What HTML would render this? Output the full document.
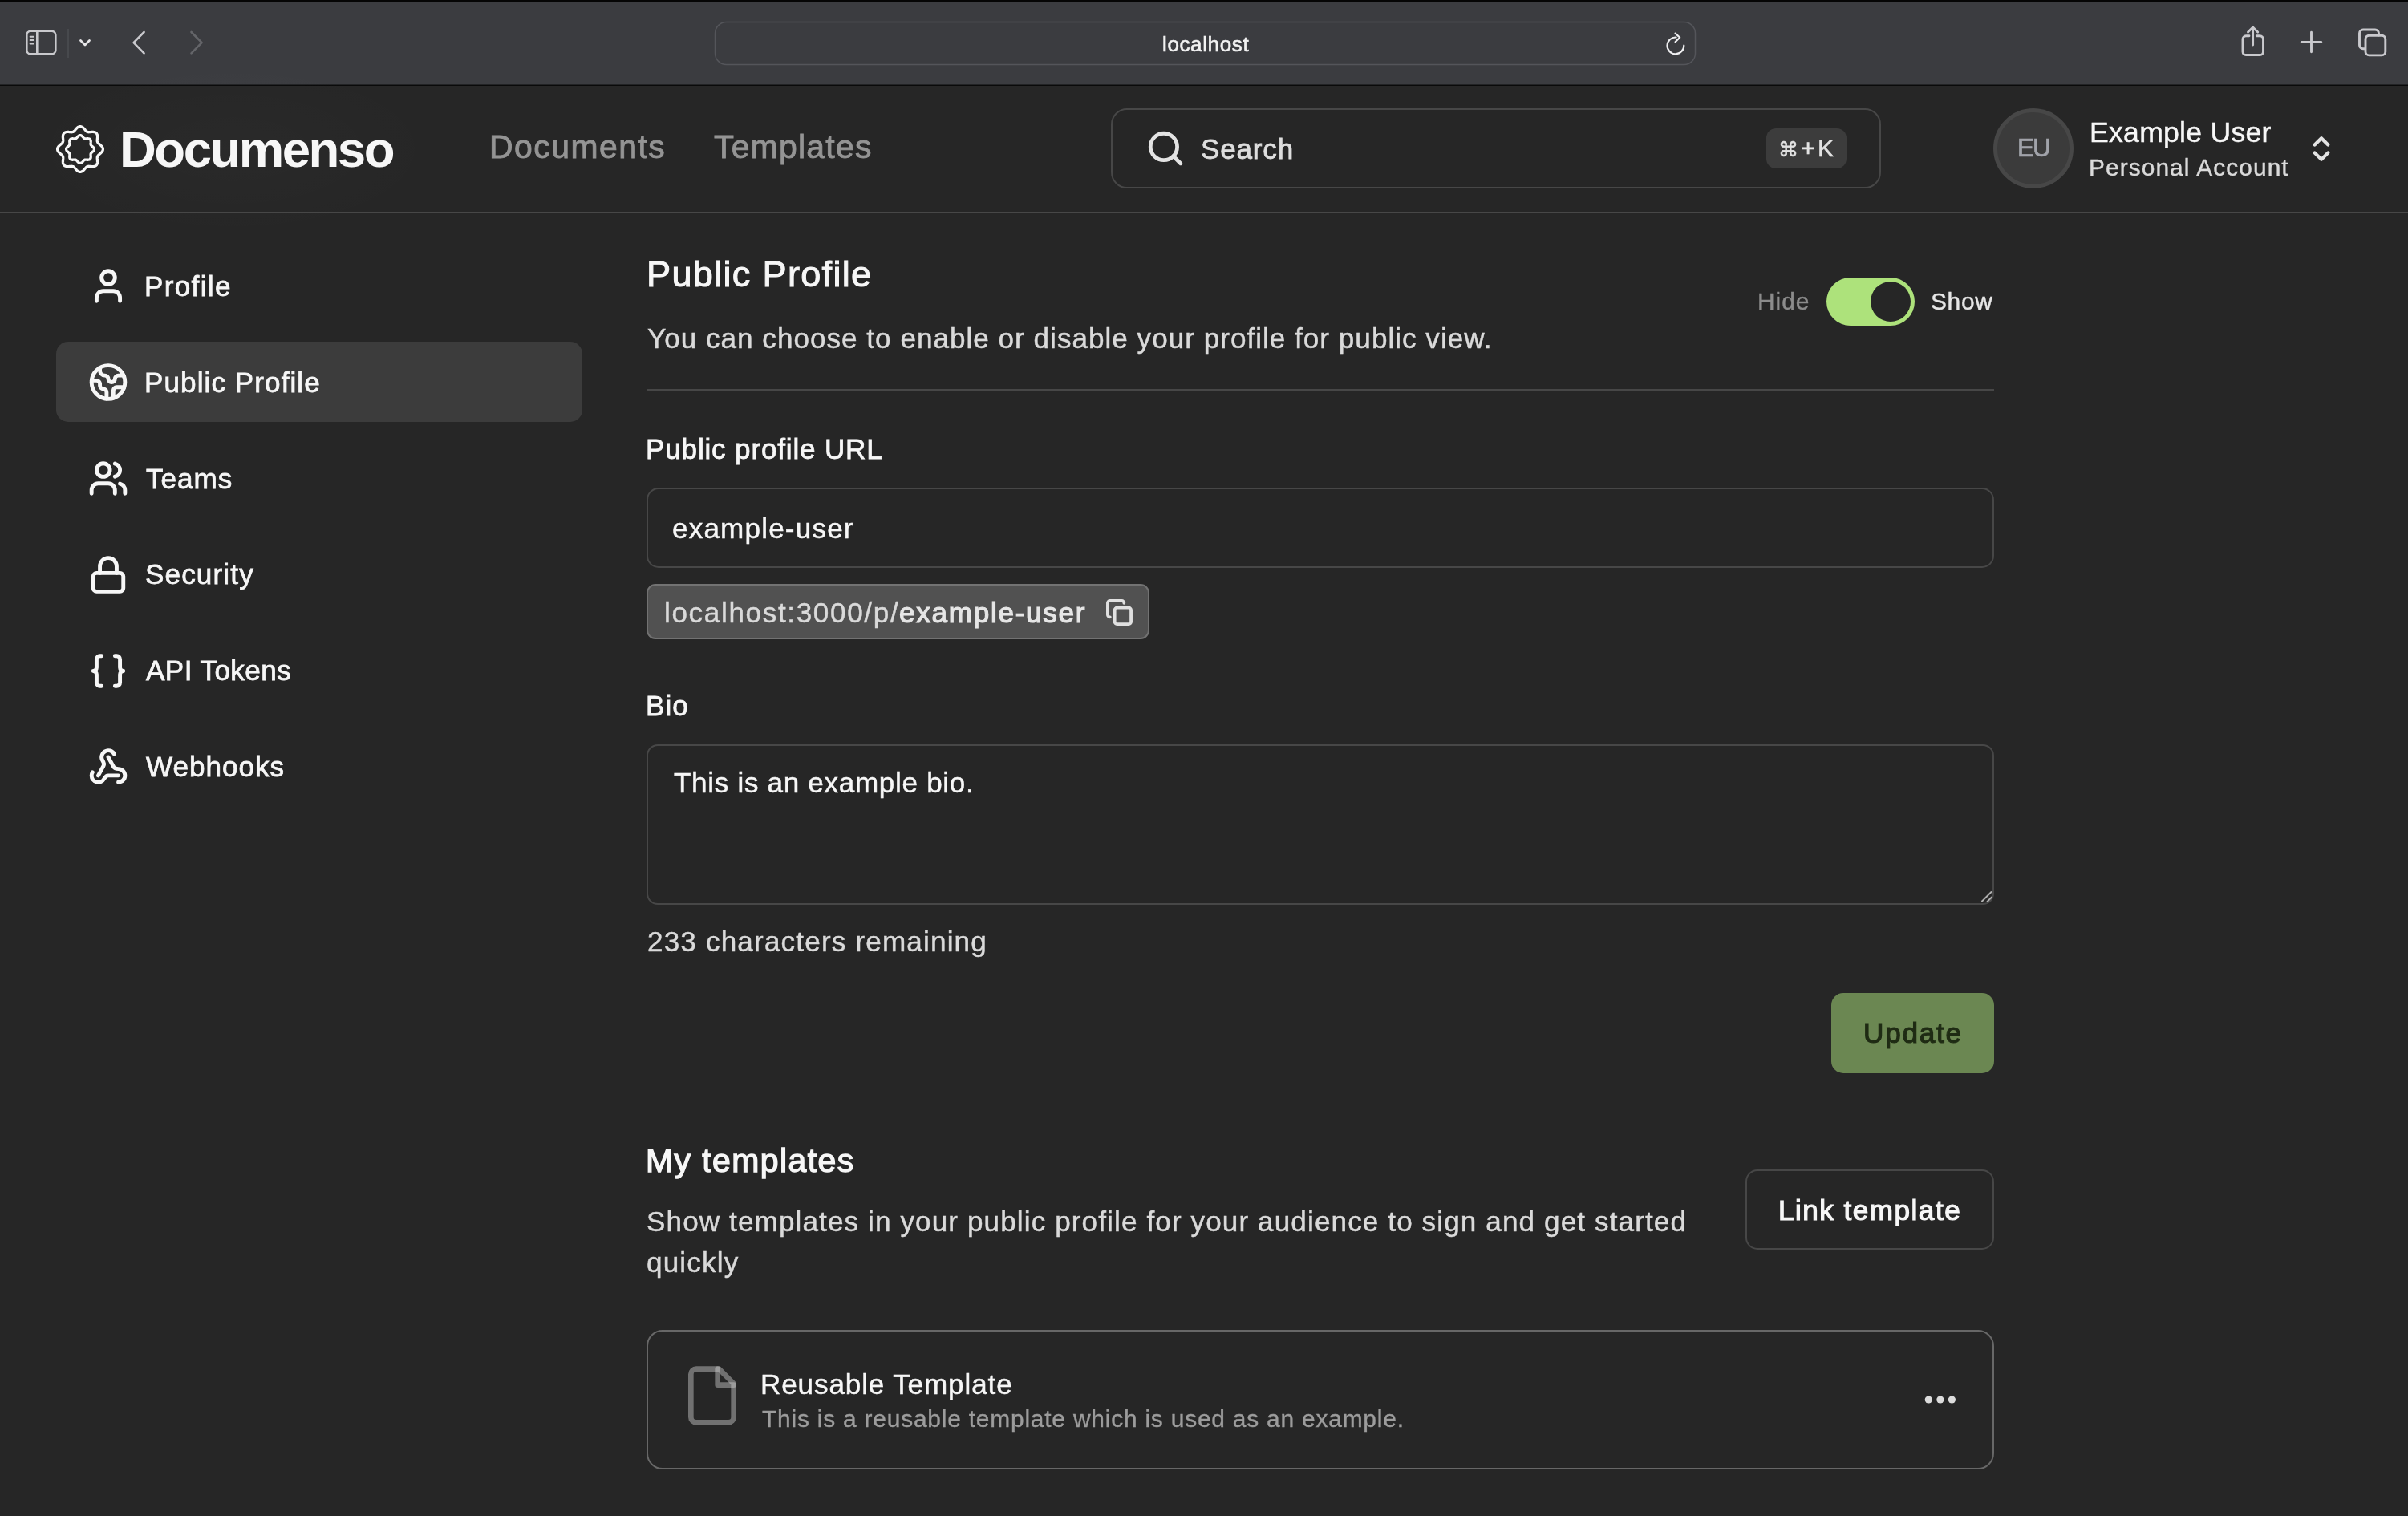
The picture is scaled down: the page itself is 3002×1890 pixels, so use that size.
<!DOCTYPE html>
<html>
<head>
<meta charset="utf-8">
<style>
html,body{margin:0;padding:0;}
body{width:3002px;height:1890px;overflow:hidden;background:#262626;position:relative;font-family:"Liberation Sans",sans-serif;}
.t{position:absolute;white-space:nowrap;font-family:"Liberation Sans",sans-serif;will-change:transform;}
svg.ov{position:absolute;left:0;top:0;}
</style>
</head>
<body>
<svg class="ov" width="3002" height="1890" viewBox="0 0 3002 1890">
  <!-- Safari toolbar -->
  <rect x="0" y="0" width="3002" height="106" fill="#3b3c40"/>
  <rect x="0" y="0" width="3002" height="2" fill="#050505"/>
  <rect x="0" y="105.5" width="3002" height="1.5" fill="#0a0a0a"/>
  <g fill="none" stroke="#c9c9cd" stroke-width="2.6" stroke-linecap="round" stroke-linejoin="round">
    <rect x="33.3" y="38.8" width="36" height="28.6" rx="5"/>
    <line x1="46.3" y1="39" x2="46.3" y2="67"/>
    <line x1="37.6" y1="45.7" x2="41.7" y2="45.7" stroke-width="2"/>
    <line x1="37.6" y1="50.1" x2="41.7" y2="50.1" stroke-width="2"/>
    <line x1="37.6" y1="54.4" x2="41.7" y2="54.4" stroke-width="2"/>
    <polyline points="179.6,40 166.6,53.2 179.6,66.3"/>
  </g>
  <line x1="85" y1="36" x2="85" y2="72" stroke="#55565a" stroke-width="1"/>
  <polyline points="100.5,50.5 106,56 111.5,50.5" fill="none" stroke="#e6e6e8" stroke-width="2.8" stroke-linecap="round" stroke-linejoin="round"/>
  <polyline points="238.5,40 251.6,53.2 238.5,66.3" fill="none" stroke="#646569" stroke-width="2.6" stroke-linecap="round" stroke-linejoin="round"/>
  <!-- url field -->
  <rect x="891.5" y="27.5" width="1222" height="53" rx="14" fill="#3b3c40" stroke="#54555a" stroke-width="1.5"/>
  <g fill="none" stroke="#efeff1" stroke-width="2.2" stroke-linecap="round" stroke-linejoin="round">
    <path d="M2099.3 56.5 A10.4 10.4 0 1 1 2089.5 46.5"/>
    <polyline points="2088.6,41.6 2094.2,46.8 2088.6,52.2"/>
  </g>
  <g fill="none" stroke="#c9c9cd" stroke-width="2.9" stroke-linecap="round" stroke-linejoin="round">
    <path d="M2804 44.8 H2800 a4 4 0 0 0 -4 4 V64.5 a4 4 0 0 0 4 4 H2817.5 a4 4 0 0 0 4 -4 V48.8 a4 4 0 0 0 -4 -4 H2813.3"/>
    <line x1="2808.6" y1="34.5" x2="2808.6" y2="56"/>
    <polyline points="2802.5,40 2808.6,34 2814.7,40"/>
    <line x1="2869.3" y1="52.5" x2="2893.7" y2="52.5"/>
    <line x1="2881.5" y1="40.3" x2="2881.5" y2="64.7"/>
    <path d="M2948.5 60.8 H2946 a4.5 4.5 0 0 1 -4.5 -4.5 V41.5 a4.5 4.5 0 0 1 4.5 -4.5 H2961 a4.5 4.5 0 0 1 4.5 4.5 V44"/>
    <rect x="2949" y="44.3" width="24.8" height="24.6" rx="4.5"/>
  </g>

  <!-- app header -->
  <defs><radialGradient id="glow" cx="0.5" cy="0.5" r="0.5"><stop offset="0" stop-color="#ffffff" stop-opacity="0.018"/><stop offset="1" stop-color="#ffffff" stop-opacity="0"/></radialGradient></defs>
  <ellipse cx="290" cy="186" rx="260" ry="110" fill="url(#glow)"/>
  <rect x="0" y="264" width="3002" height="2" fill="#474747"/>
  <g fill="none" stroke="#f7f7f7" stroke-width="3.3" id="logo">
    <path d="M100.00,157.60 L100.56,157.64 L101.11,157.74 L101.66,157.92 L102.19,158.16 L102.71,158.47 L103.22,158.82 L103.70,159.22 L104.17,159.66 L104.62,160.12 L105.05,160.60 L105.47,161.08 L105.87,161.57 L106.25,162.04 L106.63,162.49 L107.01,162.91 L107.38,163.29 L107.76,163.63 L108.14,163.93 L108.54,164.18 L108.95,164.38 L109.39,164.53 L109.85,164.64 L110.33,164.70 L110.84,164.73 L111.38,164.72 L111.94,164.68 L112.52,164.63 L113.13,164.58 L113.75,164.52 L114.39,164.46 L115.03,164.43 L115.68,164.42 L116.32,164.44 L116.94,164.51 L117.55,164.61 L118.13,164.77 L118.68,164.97 L119.19,165.24 L119.66,165.55 L120.08,165.92 L120.45,166.34 L120.76,166.81 L121.03,167.32 L121.23,167.87 L121.39,168.45 L121.49,169.06 L121.56,169.68 L121.58,170.32 L121.57,170.97 L121.54,171.61 L121.48,172.25 L121.42,172.87 L121.37,173.48 L121.32,174.06 L121.28,174.62 L121.27,175.16 L121.30,175.67 L121.36,176.15 L121.47,176.61 L121.62,177.05 L121.82,177.46 L122.07,177.86 L122.37,178.24 L122.71,178.62 L123.09,178.99 L123.51,179.37 L123.96,179.75 L124.43,180.13 L124.92,180.53 L125.40,180.95 L125.88,181.38 L126.34,181.83 L126.78,182.30 L127.18,182.78 L127.53,183.29 L127.84,183.81 L128.08,184.34 L128.26,184.89 L128.36,185.44 L128.40,186.00 L128.36,186.56 L128.26,187.11 L128.08,187.66 L127.84,188.19 L127.53,188.71 L127.18,189.22 L126.78,189.70 L126.34,190.17 L125.88,190.62 L125.40,191.05 L124.92,191.47 L124.43,191.87 L123.96,192.25 L123.51,192.63 L123.09,193.01 L122.71,193.38 L122.37,193.76 L122.07,194.14 L121.82,194.54 L121.62,194.95 L121.47,195.39 L121.36,195.85 L121.30,196.33 L121.27,196.84 L121.28,197.38 L121.32,197.94 L121.37,198.52 L121.42,199.13 L121.48,199.75 L121.54,200.39 L121.57,201.03 L121.58,201.68 L121.56,202.32 L121.49,202.94 L121.39,203.55 L121.23,204.13 L121.03,204.68 L120.76,205.19 L120.45,205.66 L120.08,206.08 L119.66,206.45 L119.19,206.76 L118.68,207.03 L118.13,207.23 L117.55,207.39 L116.94,207.49 L116.32,207.56 L115.68,207.58 L115.03,207.57 L114.39,207.54 L113.75,207.48 L113.13,207.42 L112.52,207.37 L111.94,207.32 L111.38,207.28 L110.84,207.27 L110.33,207.30 L109.85,207.36 L109.39,207.47 L108.95,207.62 L108.54,207.82 L108.14,208.07 L107.76,208.37 L107.38,208.71 L107.01,209.09 L106.63,209.51 L106.25,209.96 L105.87,210.43 L105.47,210.92 L105.05,211.40 L104.62,211.88 L104.17,212.34 L103.70,212.78 L103.22,213.18 L102.71,213.53 L102.19,213.84 L101.66,214.08 L101.11,214.26 L100.56,214.36 L100.00,214.40 L99.44,214.36 L98.89,214.26 L98.34,214.08 L97.81,213.84 L97.29,213.53 L96.78,213.18 L96.30,212.78 L95.83,212.34 L95.38,211.88 L94.95,211.40 L94.53,210.92 L94.13,210.43 L93.75,209.96 L93.37,209.51 L92.99,209.09 L92.62,208.71 L92.24,208.37 L91.86,208.07 L91.46,207.82 L91.05,207.62 L90.61,207.47 L90.15,207.36 L89.67,207.30 L89.16,207.27 L88.62,207.28 L88.06,207.32 L87.48,207.37 L86.87,207.42 L86.25,207.48 L85.61,207.54 L84.97,207.57 L84.32,207.58 L83.68,207.56 L83.06,207.49 L82.45,207.39 L81.87,207.23 L81.32,207.03 L80.81,206.76 L80.34,206.45 L79.92,206.08 L79.55,205.66 L79.24,205.19 L78.97,204.68 L78.77,204.13 L78.61,203.55 L78.51,202.94 L78.44,202.32 L78.42,201.68 L78.43,201.03 L78.46,200.39 L78.52,199.75 L78.58,199.13 L78.63,198.52 L78.68,197.94 L78.72,197.38 L78.73,196.84 L78.70,196.33 L78.64,195.85 L78.53,195.39 L78.38,194.95 L78.18,194.54 L77.93,194.14 L77.63,193.76 L77.29,193.38 L76.91,193.01 L76.49,192.63 L76.04,192.25 L75.57,191.87 L75.08,191.47 L74.60,191.05 L74.12,190.62 L73.66,190.17 L73.22,189.70 L72.82,189.22 L72.47,188.71 L72.16,188.19 L71.92,187.66 L71.74,187.11 L71.64,186.56 L71.60,186.00 L71.64,185.44 L71.74,184.89 L71.92,184.34 L72.16,183.81 L72.47,183.29 L72.82,182.78 L73.22,182.30 L73.66,181.83 L74.12,181.38 L74.60,180.95 L75.08,180.53 L75.57,180.13 L76.04,179.75 L76.49,179.37 L76.91,178.99 L77.29,178.62 L77.63,178.24 L77.93,177.86 L78.18,177.46 L78.38,177.05 L78.53,176.61 L78.64,176.15 L78.70,175.67 L78.73,175.16 L78.72,174.62 L78.68,174.06 L78.63,173.48 L78.58,172.87 L78.52,172.25 L78.46,171.61 L78.43,170.97 L78.42,170.32 L78.44,169.68 L78.51,169.06 L78.61,168.45 L78.77,167.87 L78.97,167.32 L79.24,166.81 L79.55,166.34 L79.92,165.92 L80.34,165.55 L80.81,165.24 L81.32,164.97 L81.87,164.77 L82.45,164.61 L83.06,164.51 L83.68,164.44 L84.32,164.42 L84.97,164.43 L85.61,164.46 L86.25,164.52 L86.87,164.58 L87.48,164.63 L88.06,164.68 L88.62,164.72 L89.16,164.73 L89.67,164.70 L90.15,164.64 L90.61,164.53 L91.05,164.38 L91.46,164.18 L91.86,163.93 L92.24,163.63 L92.62,163.29 L92.99,162.91 L93.37,162.49 L93.75,162.04 L94.13,161.57 L94.53,161.08 L94.95,160.60 L95.38,160.12 L95.83,159.66 L96.30,159.22 L96.78,158.82 L97.29,158.47 L97.81,158.16 L98.34,157.92 L98.89,157.74 L99.44,157.64 Z"/>
    <path d="M100.00,168.60 L100.34,168.62 L100.68,168.69 L101.01,168.79 L101.34,168.94 L101.66,169.12 L101.97,169.33 L102.27,169.58 L102.56,169.84 L102.84,170.12 L103.10,170.41 L103.36,170.70 L103.60,170.99 L103.84,171.27 L104.08,171.55 L104.31,171.80 L104.54,172.03 L104.77,172.24 L105.01,172.42 L105.26,172.57 L105.51,172.70 L105.78,172.79 L106.06,172.86 L106.36,172.90 L106.67,172.91 L107.00,172.91 L107.34,172.90 L107.70,172.87 L108.07,172.84 L108.45,172.81 L108.83,172.78 L109.23,172.76 L109.62,172.76 L110.01,172.78 L110.39,172.82 L110.76,172.89 L111.11,172.99 L111.45,173.12 L111.76,173.28 L112.05,173.47 L112.30,173.70 L112.53,173.95 L112.72,174.24 L112.88,174.55 L113.01,174.89 L113.11,175.24 L113.18,175.61 L113.22,175.99 L113.24,176.38 L113.24,176.77 L113.22,177.17 L113.19,177.55 L113.16,177.93 L113.13,178.30 L113.10,178.66 L113.09,179.00 L113.09,179.33 L113.10,179.64 L113.14,179.94 L113.21,180.22 L113.30,180.49 L113.43,180.74 L113.58,180.99 L113.76,181.23 L113.97,181.46 L114.20,181.69 L114.45,181.92 L114.73,182.16 L115.01,182.40 L115.30,182.64 L115.59,182.90 L115.88,183.16 L116.16,183.44 L116.42,183.73 L116.67,184.03 L116.88,184.34 L117.06,184.66 L117.21,184.99 L117.31,185.32 L117.38,185.66 L117.40,186.00 L117.38,186.34 L117.31,186.68 L117.21,187.01 L117.06,187.34 L116.88,187.66 L116.67,187.97 L116.42,188.27 L116.16,188.56 L115.88,188.84 L115.59,189.10 L115.30,189.36 L115.01,189.60 L114.73,189.84 L114.45,190.08 L114.20,190.31 L113.97,190.54 L113.76,190.77 L113.58,191.01 L113.43,191.26 L113.30,191.51 L113.21,191.78 L113.14,192.06 L113.10,192.36 L113.09,192.67 L113.09,193.00 L113.10,193.34 L113.13,193.70 L113.16,194.07 L113.19,194.45 L113.22,194.83 L113.24,195.23 L113.24,195.62 L113.22,196.01 L113.18,196.39 L113.11,196.76 L113.01,197.11 L112.88,197.45 L112.72,197.76 L112.53,198.05 L112.30,198.30 L112.05,198.53 L111.76,198.72 L111.45,198.88 L111.11,199.01 L110.76,199.11 L110.39,199.18 L110.01,199.22 L109.62,199.24 L109.23,199.24 L108.83,199.22 L108.45,199.19 L108.07,199.16 L107.70,199.13 L107.34,199.10 L107.00,199.09 L106.67,199.09 L106.36,199.10 L106.06,199.14 L105.78,199.21 L105.51,199.30 L105.26,199.43 L105.01,199.58 L104.77,199.76 L104.54,199.97 L104.31,200.20 L104.08,200.45 L103.84,200.73 L103.60,201.01 L103.36,201.30 L103.10,201.59 L102.84,201.88 L102.56,202.16 L102.27,202.42 L101.97,202.67 L101.66,202.88 L101.34,203.06 L101.01,203.21 L100.68,203.31 L100.34,203.38 L100.00,203.40 L99.66,203.38 L99.32,203.31 L98.99,203.21 L98.66,203.06 L98.34,202.88 L98.03,202.67 L97.73,202.42 L97.44,202.16 L97.16,201.88 L96.90,201.59 L96.64,201.30 L96.40,201.01 L96.16,200.73 L95.92,200.45 L95.69,200.20 L95.46,199.97 L95.23,199.76 L94.99,199.58 L94.74,199.43 L94.49,199.30 L94.22,199.21 L93.94,199.14 L93.64,199.10 L93.33,199.09 L93.00,199.09 L92.66,199.10 L92.30,199.13 L91.93,199.16 L91.55,199.19 L91.17,199.22 L90.77,199.24 L90.38,199.24 L89.99,199.22 L89.61,199.18 L89.24,199.11 L88.89,199.01 L88.55,198.88 L88.24,198.72 L87.95,198.53 L87.70,198.30 L87.47,198.05 L87.28,197.76 L87.12,197.45 L86.99,197.11 L86.89,196.76 L86.82,196.39 L86.78,196.01 L86.76,195.62 L86.76,195.23 L86.78,194.83 L86.81,194.45 L86.84,194.07 L86.87,193.70 L86.90,193.34 L86.91,193.00 L86.91,192.67 L86.90,192.36 L86.86,192.06 L86.79,191.78 L86.70,191.51 L86.57,191.26 L86.42,191.01 L86.24,190.77 L86.03,190.54 L85.80,190.31 L85.55,190.08 L85.27,189.84 L84.99,189.60 L84.70,189.36 L84.41,189.10 L84.12,188.84 L83.84,188.56 L83.58,188.27 L83.33,187.97 L83.12,187.66 L82.94,187.34 L82.79,187.01 L82.69,186.68 L82.62,186.34 L82.60,186.00 L82.62,185.66 L82.69,185.32 L82.79,184.99 L82.94,184.66 L83.12,184.34 L83.33,184.03 L83.58,183.73 L83.84,183.44 L84.12,183.16 L84.41,182.90 L84.70,182.64 L84.99,182.40 L85.27,182.16 L85.55,181.92 L85.80,181.69 L86.03,181.46 L86.24,181.23 L86.42,180.99 L86.57,180.74 L86.70,180.49 L86.79,180.22 L86.86,179.94 L86.90,179.64 L86.91,179.33 L86.91,179.00 L86.90,178.66 L86.87,178.30 L86.84,177.93 L86.81,177.55 L86.78,177.17 L86.76,176.77 L86.76,176.38 L86.78,175.99 L86.82,175.61 L86.89,175.24 L86.99,174.89 L87.12,174.55 L87.28,174.24 L87.47,173.95 L87.70,173.70 L87.95,173.47 L88.24,173.28 L88.55,173.12 L88.89,172.99 L89.24,172.89 L89.61,172.82 L89.99,172.78 L90.38,172.76 L90.77,172.76 L91.17,172.78 L91.55,172.81 L91.93,172.84 L92.30,172.87 L92.66,172.90 L93.00,172.91 L93.33,172.91 L93.64,172.90 L93.94,172.86 L94.22,172.79 L94.49,172.70 L94.74,172.57 L94.99,172.42 L95.23,172.24 L95.46,172.03 L95.69,171.80 L95.92,171.55 L96.16,171.27 L96.40,170.99 L96.64,170.70 L96.90,170.41 L97.16,170.12 L97.44,169.84 L97.73,169.58 L98.03,169.33 L98.34,169.12 L98.66,168.94 L98.99,168.79 L99.32,168.69 L99.66,168.62 Z"/>
  </g>
  <!-- search -->
  <rect x="1386" y="136" width="958" height="98" rx="19" fill="none" stroke="#474747" stroke-width="2"/>
  <g transform="translate(1428,160) scale(2.0833)" fill="none" stroke="#e3e3e3" stroke-width="2.3" stroke-linecap="round" stroke-linejoin="round">
    <circle cx="11" cy="11" r="8"/><path d="m21 21-4.3-4.3"/>
  </g>
  <rect x="2202" y="160" width="100" height="50" rx="12" fill="#3c3c3c"/>
  <!-- avatar -->
  <circle cx="2535" cy="185" r="47.5" fill="#3b3b3b" stroke="#474747" stroke-width="5"/>
  <g transform="translate(2874,165.5) scale(1.6667)" fill="none" stroke="#e3e3e3" stroke-width="2.5" stroke-linecap="round" stroke-linejoin="round">
    <path d="m7 15 5 5 5-5"/><path d="m7 9 5-5 5 5"/>
  </g>

  <!-- sidebar -->
  <rect x="70" y="426" width="656" height="100" rx="15" fill="#3c3c3c"/>
  <g fill="none" stroke="#f7f7f7" stroke-width="2.35" stroke-linecap="round" stroke-linejoin="round">
    <g transform="translate(110,331.5) scale(2.0833)">
      <path d="M19 21v-2a4 4 0 0 0-4-4H9a4 4 0 0 0-4 4v2"/><circle cx="12" cy="7" r="4"/>
    </g>
    <g transform="translate(110,451.5) scale(2.0833)">
      <path d="M21.54 15H17a2 2 0 0 0-2 2v4.54"/><path d="M7 3.34V5a3 3 0 0 0 3 3v0a2 2 0 0 1 2 2v0c0 1.1.9 2 2 2v0a2 2 0 0 0 2-2v0c0-1.1.9-2 2-2h3.17"/><path d="M11 21.95V18a2 2 0 0 0-2-2v0a2 2 0 0 1-2-2v-1a2 2 0 0 0-2-2H2.05"/><circle cx="12" cy="12" r="10"/>
    </g>
    <g transform="translate(110,571.5) scale(2.0833)">
      <path d="M16 21v-2a4 4 0 0 0-4-4H6a4 4 0 0 0-4 4v2"/><circle cx="9" cy="7" r="4"/><path d="M22 21v-2a4 4 0 0 0-3-3.87"/><path d="M16 3.13a4 4 0 0 1 0 7.75"/>
    </g>
    <g transform="translate(110,691.5) scale(2.0833)">
      <rect width="18" height="11" x="3" y="11" rx="2" ry="2"/><path d="M7 11V7a5 5 0 0 1 10 0v4"/>
    </g>
    <g transform="translate(110,811.5) scale(2.0833)">
      <path d="M8 3H7a2 2 0 0 0-2 2v5a2 2 0 0 1-2 2 2 2 0 0 1 2 2v5c0 1.1.9 2 2 2h1"/><path d="M16 21h1a2 2 0 0 0 2-2v-5c0-1.1.9-2 2-2a2 2 0 0 1-2-2V5a2 2 0 0 0-2-2h-1"/>
    </g>
    <g transform="translate(110,931.5) scale(2.0833)">
      <path d="M18 16.98h-5.99c-1.1 0-1.95.94-2.48 1.9A4 4 0 0 1 2 17c.01-.7.2-1.4.57-2"/><path d="m6 17 3.13-5.78c.53-.97.1-2.18-.5-3.1a4 4 0 1 1 6.89-4.06"/><path d="m12 6 3.13 5.73C15.66 12.7 16.9 13 18 13a4 4 0 0 1 0 8"/>
    </g>
  </g>

  <!-- main: toggle -->
  <rect x="2277" y="346" width="110" height="60" rx="30" fill="#ade27b"/>
  <circle cx="2357" cy="376" r="25" fill="#262626"/>
  <rect x="806" y="485" width="1680" height="2" fill="#474747"/>
  <!-- url input -->
  <rect x="807" y="609" width="1678" height="98" rx="14" fill="none" stroke="#474747" stroke-width="2"/>
  <!-- badge -->
  <rect x="807" y="729" width="625" height="67" rx="10" fill="#515151" stroke="#727272" stroke-width="2"/>
  <g transform="translate(1378,746) scale(1.4583)" fill="none" stroke="#e0e0e0" stroke-width="2.6" stroke-linecap="round" stroke-linejoin="round">
    <rect width="14" height="14" x="8" y="8" rx="2" ry="2"/><path d="M4 16c-1.1 0-2-.9-2-2V4c0-1.1.9-2 2-2h10c1.1 0 2 .9 2 2"/>
  </g>
  <!-- textarea -->
  <rect x="807" y="929" width="1678" height="198" rx="13" fill="none" stroke="#474747" stroke-width="2"/>
  <g stroke="#b0b0b0" stroke-width="2" stroke-linecap="round">
    <line x1="2471" y1="1123.5" x2="2482.5" y2="1112"/>
    <line x1="2477.5" y1="1124" x2="2483" y2="1118.5"/>
  </g>
  <!-- update btn -->
  <rect x="2283" y="1238" width="203" height="100" rx="15" fill="#6b8752"/>
  <!-- link template btn -->
  <rect x="2177" y="1459" width="308" height="98" rx="14" fill="none" stroke="#474747" stroke-width="2"/>
  <!-- card -->
  <rect x="807" y="1659" width="1678" height="172" rx="19" fill="none" stroke="#676767" stroke-width="2"/>
  <g transform="translate(848,1700) scale(3.3333)" fill="none" stroke="rgba(218,218,218,0.42)" stroke-width="2" stroke-linecap="round" stroke-linejoin="round">
    <path d="M14.5 2H6a2 2 0 0 0-2 2v16a2 2 0 0 0 2 2h12a2 2 0 0 0 2-2V7.5L14.5 2z"/><polyline points="14 2 14 8 20 8"/>
  </g>
  <g fill="#dcdcdc">
    <circle cx="2404.3" cy="1745" r="4.6"/><circle cx="2418.9" cy="1745" r="4.6"/><circle cx="2433.4" cy="1745" r="4.6"/>
  </g>
</svg>
<div class="t" id="t_localhost" style="left:1449.25px;top:39.59px;font-size:26px;line-height:31px;color:#f2f2f2;-webkit-text-stroke:0.57px #f2f2f2;letter-spacing:0.625px;">localhost</div>
<div class="t" id="t_logo" style="left:149.35px;top:147.70px;font-size:63.5px;line-height:76px;color:#f7f7f7;font-weight:700;letter-spacing:-2.500px;">Documenso</div>
<div class="t" id="t_docs" style="left:609.64px;top:159.33px;font-size:40.9px;line-height:49px;color:#949494;-webkit-text-stroke:0.90px #949494;letter-spacing:1.500px;">Documents</div>
<div class="t" id="t_tmpls" style="left:890.08px;top:159.33px;font-size:40.9px;line-height:49px;color:#949494;-webkit-text-stroke:0.90px #949494;letter-spacing:1.250px;">Templates</div>
<div class="t" id="t_search" style="left:1497.41px;top:164.84px;font-size:35.1px;line-height:42px;color:#dedede;-webkit-text-stroke:0.77px #dedede;letter-spacing:0.800px;">Search</div>
<div class="t" id="t_kbd" style="left:2217.00px;top:167.31px;font-size:29.4px;line-height:35px;color:#e3e3e3;-webkit-text-stroke:0.65px #e3e3e3;letter-spacing:3.500px;"><span style="font-size:0.86em;vertical-align:0.02em">⌘</span>+K</div>
<div class="t" id="t_eu" style="left:2515.42px;top:165.09px;font-size:31.5px;line-height:38px;color:#a1a3aa;-webkit-text-stroke:0.69px #a1a3aa;letter-spacing:-2.000px;">EU</div>
<div class="t" id="t_uname" style="left:2604.58px;top:144.16px;font-size:35.6px;line-height:43px;color:#f7f7f7;-webkit-text-stroke:0.46px #f7f7f7;letter-spacing:0.273px;">Example User</div>
<div class="t" id="t_uacct" style="left:2604.05px;top:191.34px;font-size:29.9px;line-height:36px;color:#dadada;-webkit-text-stroke:0.39px #dadada;letter-spacing:1.067px;">Personal Account</div>
<div class="t" id="t_s1" style="left:179.52px;top:336.14px;font-size:35.1px;line-height:42px;color:#f7f7f7;-webkit-text-stroke:0.77px #f7f7f7;letter-spacing:1.333px;">Profile</div>
<div class="t" id="t_s2" style="left:179.52px;top:455.64px;font-size:35.1px;line-height:42px;color:#f7f7f7;-webkit-text-stroke:0.77px #f7f7f7;letter-spacing:1.077px;">Public Profile</div>
<div class="t" id="t_s3" style="left:181.61px;top:575.64px;font-size:35.1px;line-height:42px;color:#f7f7f7;-webkit-text-stroke:0.77px #f7f7f7;letter-spacing:1.000px;">Teams</div>
<div class="t" id="t_s4" style="left:180.81px;top:694.84px;font-size:35.1px;line-height:42px;color:#f7f7f7;-webkit-text-stroke:0.77px #f7f7f7;letter-spacing:1.143px;">Security</div>
<div class="t" id="t_s5" style="left:182.33px;top:815.14px;font-size:35.1px;line-height:42px;color:#f7f7f7;-webkit-text-stroke:0.77px #f7f7f7;letter-spacing:0.444px;">API Tokens</div>
<div class="t" id="t_s6" style="left:182.25px;top:935.34px;font-size:35.1px;line-height:42px;color:#f7f7f7;-webkit-text-stroke:0.77px #f7f7f7;letter-spacing:1.000px;">Webhooks</div>
<div class="t" id="t_h1" style="left:805.70px;top:315.37px;font-size:45.1px;line-height:54px;color:#f7f7f7;-webkit-text-stroke:0.99px #f7f7f7;letter-spacing:1.308px;">Public Profile</div>
<div class="t" id="t_sub" style="left:807.23px;top:401.04px;font-size:35.1px;line-height:42px;color:#dadada;-webkit-text-stroke:0.46px #dadada;letter-spacing:1.016px;">You can choose to enable or disable your profile for public view.</div>
<div class="t" id="t_hide" style="left:2191.15px;top:357.64px;font-size:29.9px;line-height:36px;color:#8c8c8c;-webkit-text-stroke:0.39px #8c8c8c;letter-spacing:1.000px;">Hide</div>
<div class="t" id="t_show" style="left:2407.14px;top:357.64px;font-size:29.9px;line-height:36px;color:#e6e6e6;-webkit-text-stroke:0.39px #e6e6e6;letter-spacing:0.667px;">Show</div>
<div class="t" id="t_lbl_url" style="left:805.12px;top:538.84px;font-size:35.1px;line-height:42px;color:#f7f7f7;-webkit-text-stroke:0.77px #f7f7f7;letter-spacing:0.824px;">Public profile URL</div>
<div class="t" id="t_input" style="left:837.81px;top:637.64px;font-size:35.1px;line-height:42px;color:#f7f7f7;-webkit-text-stroke:0.46px #f7f7f7;letter-spacing:1.182px;">example-user</div>
<div class="t" id="t_badge1" style="left:828.13px;top:743.14px;font-size:35.1px;line-height:42px;color:#dadada;-webkit-text-stroke:0.46px #dadada;letter-spacing:1.650px;">localhost:3000/p/</div>
<div class="t" id="t_badge2" style="left:1121.01px;top:743.14px;font-size:35.1px;line-height:42px;color:#e6e6e6;-webkit-text-stroke:1.19px #e6e6e6;letter-spacing:1.727px;">example-user</div>
<div class="t" id="t_bio" style="left:805.12px;top:858.94px;font-size:35.1px;line-height:42px;color:#f7f7f7;-webkit-text-stroke:0.77px #f7f7f7;letter-spacing:1.000px;">Bio</div>
<div class="t" id="t_biotext" style="left:840.21px;top:955.24px;font-size:35.1px;line-height:42px;color:#f7f7f7;-webkit-text-stroke:0.46px #f7f7f7;letter-spacing:0.682px;">This is an example bio.</div>
<div class="t" id="t_remain" style="left:806.73px;top:1152.74px;font-size:35.1px;line-height:42px;color:#dadada;-webkit-text-stroke:0.46px #dadada;letter-spacing:1.174px;">233 characters remaining</div>
<div class="t" id="t_update" style="left:2323.09px;top:1267.44px;font-size:35.1px;line-height:42px;color:#1f2b14;-webkit-text-stroke:1.19px #1f2b14;letter-spacing:1.800px;">Update</div>
<div class="t" id="t_mytpl" style="left:804.84px;top:1423.33px;font-size:40.9px;line-height:49px;color:#f7f7f7;-webkit-text-stroke:1.39px #f7f7f7;letter-spacing:1.455px;">My templates</div>
<div class="t" id="t_desc1" style="left:806.41px;top:1502.34px;font-size:35.1px;line-height:42px;color:#dadada;-webkit-text-stroke:0.46px #dadada;letter-spacing:1.115px;">Show templates in your public profile for your audience to sign and get started</div>
<div class="t" id="t_desc2" style="left:805.53px;top:1553.04px;font-size:35.1px;line-height:42px;color:#dadada;-webkit-text-stroke:0.46px #dadada;letter-spacing:1.167px;">quickly</div>
<div class="t" id="t_link" style="left:2216.82px;top:1487.94px;font-size:35.1px;line-height:42px;color:#f7f7f7;-webkit-text-stroke:1.19px #f7f7f7;letter-spacing:1.500px;">Link template</div>
<div class="t" id="t_rt" style="left:947.52px;top:1705.44px;font-size:35.1px;line-height:42px;color:#f7f7f7;-webkit-text-stroke:0.46px #f7f7f7;letter-spacing:0.875px;">Reusable Template</div>
<div class="t" id="t_rtd" style="left:949.73px;top:1751.34px;font-size:29.9px;line-height:36px;color:#9c9c9c;-webkit-text-stroke:0.39px #9c9c9c;letter-spacing:0.800px;">This is a reusable template which is used as an example.</div>
</body>
</html>
